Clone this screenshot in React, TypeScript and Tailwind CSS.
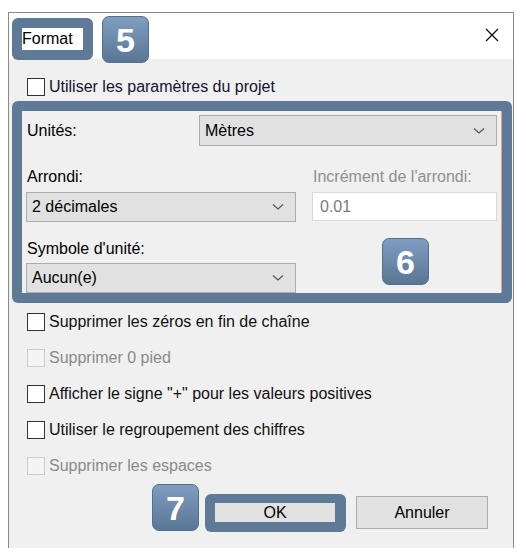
import { ReactNode } from 'react';

const font = { fontFamily: '"Liberation Sans", Arial, sans-serif' };

function Chevron() {
  return (
    <svg width="12" height="8" viewBox="0 0 12 8" className="shrink-0">
      <path d="M1 1.5 L6 6 L11 1.5" fill="none" stroke="#555" strokeWidth="1.2" />
    </svg>
  );
}

function Select({ value, className }: { value: string; className: string }) {
  return (
    <div
      className={`flex items-center justify-between bg-[#e1e1e1] border border-[#adadad] pl-[5px] pr-[11px] text-[16px] text-black ${className}`}
    >
      <span>{value}</span>
      <Chevron />
    </div>
  );
}

function Badge({ n, className = '' }: { n: string; className?: string }) {
  return (
    <div
      className={`w-[47px] h-[47px] rounded-[7px] border border-[#55708d] bg-gradient-to-b from-[#7f9ec0] to-[#5a7695] flex items-center justify-center text-white font-bold text-[34px] leading-none ${className}`}
    >
      {n}
    </div>
  );
}

function CheckRow({ label, disabled = false }: { label: ReactNode; disabled?: boolean }) {
  return (
    <div className="h-[36px] flex items-center pl-[18px]">
      <div
        className={`w-[18px] h-[18px] border ${
          disabled ? 'border-[#cccccc] bg-[#f4f4f4]' : 'border-[#333333] bg-white'
        }`}
      />
      <span className={`ml-[4px] text-[16px] ${disabled ? 'text-[#8a8a8a]' : 'text-[#111]'}`}>
        {label}
      </span>
    </div>
  );
}

export default function App() {
  return (
    <div className="w-[526px] h-[558px] bg-white overflow-hidden" style={font}>
      <div className="ml-[8px] mt-[12px] w-[506px] h-[536px] border-l border-t border-r border-[#8a8a8a] flex flex-col">
        {/* Title bar */}
        <div className="h-[46px] bg-white flex items-start pl-[3px] shrink-0 relative z-10">
          <div className="mt-[5px] w-[81px] h-[42px] rounded-[6px] bg-[#5f7a96] flex items-center pl-[10px]">
            <span className="w-[61px] h-[22px] bg-white text-[16px] text-black leading-[22px]">
              Format
            </span>
          </div>
          <Badge n="5" className="ml-[9px] mt-[3px]" />
          <div className="ml-auto mr-[14px] mt-[15px]">
            <svg width="14" height="14" viewBox="0 0 14 14">
              <path d="M1 1 L13 13 M13 1 L1 13" stroke="#111" strokeWidth="1.3" />
            </svg>
          </div>
        </div>

        {/* Body */}
        <div className="flex-1 bg-[#f0f0f0] flex flex-col">
          <div className="h-[36px] mt-[10px] flex items-center pl-[18px]">
            <div className="w-[18px] h-[18px] border border-[#333333] bg-white" />
            <span className="ml-[4px] text-[16px] text-[#141432]">Utiliser les paramètres du projet</span>
          </div>

          {/* Highlighted group 6 */}
          <div className="ml-[3px] mt-[-4px] w-[500px] h-[202px] rounded-[6px] bg-[#5f7a96] p-[10px]">
            <div className="relative h-full bg-[#f0f0f0] border-r border-[#dca0a0] pl-[4px] pr-[4px] overflow-hidden">
              <div className="mt-[4px] h-[31px] flex items-center">
                <span className="pl-[1px] w-[173px] text-[16px] text-black">Unités:</span>
                <Select value="Mètres" className="w-[298px] h-[31px]" />
              </div>

              <div className="mt-[22px] flex">
                <div className="w-[270px]">
                  <div className="pl-[1px] h-[18px] text-[16px] text-black leading-[18px]">Arrondi:</div>
                  <Select value="2 décimales" className="mt-[6px] w-[270px] h-[30px]" />
                  <div className="mt-[18px] pl-[1px] h-[18px] text-[16px] text-black leading-[18px]">
                    Symbole d'unité:
                  </div>
                  <Select value="Aucun(e)" className="mt-[5px] w-[270px] h-[30px]" />
                </div>
                <div className="ml-[16px] w-[185px]">
                  <div className="pl-[1px] h-[18px] text-[16px] text-[#8f8f8f] leading-[18px] whitespace-nowrap">
                    Incrément de l'arrondi:
                  </div>
                  <div className="mt-[6px] h-[29px] bg-white border border-[#d9d9d9] pl-[7px] flex items-center text-[16px] text-[#7a7a7a]">
                    0.01
                  </div>
                  <Badge n="6" className="ml-[70px] mt-[17px]" />
                </div>
              </div>
            </div>
          </div>

          <div className="mt-[1px]">
            <CheckRow label="Supprimer les zéros en fin de chaîne" />
            <CheckRow label="Supprimer 0 pied" disabled />
            <CheckRow label={'Afficher le signe "+" pour les valeurs positives'} />
            <CheckRow label="Utiliser le regroupement des chiffres" />
            <CheckRow label="Supprimer les espaces" disabled />
          </div>

          {/* Buttons */}
          <div className="flex items-start pl-[143px]">
            <Badge n="7" />
            <div className="ml-[6px] mt-[10px] w-[141px] h-[38px] rounded-[6px] bg-[#5f7a96] pt-[9px] pl-[10px]">
              <div className="w-[120px] h-[19px] bg-[#e1e1e1] flex items-center justify-center text-[16px] text-black">
                OK
              </div>
            </div>
            <div className="ml-[10px] mt-[12px] w-[132px] h-[33px] bg-[#e1e1e1] border border-[#adadad] flex items-center justify-center text-[16px] text-black">
              Annuler
            </div>
          </div>
        </div>
      </div>
    </div>
  );
}
